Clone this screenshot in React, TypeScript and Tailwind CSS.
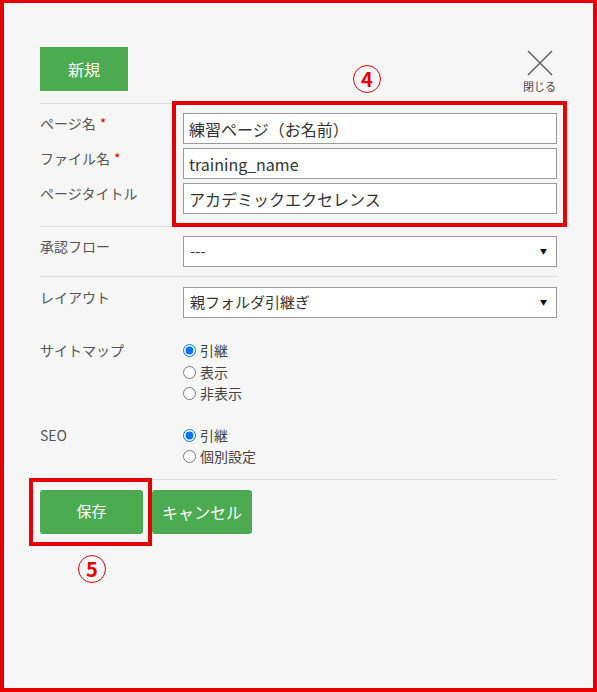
import React from 'react'

const font = { fontFamily: '"Noto Sans CJK JP", "Noto Sans", sans-serif' }

function Label({ children, required }: { children: React.ReactNode; required?: boolean }) {
  return (
    <div className="w-[143px] shrink-0 text-[14px] leading-5 text-[#555]">
      {children}
      {required && <span className="ml-1 text-[#e60000]">*</span>}
    </div>
  )
}

function TextBox({ value }: { value: string }) {
  return (
    <div className="flex h-[31px] items-center border border-[#9a9a9a] bg-white px-[5px] text-[16px] text-[#333]">
      {value}
    </div>
  )
}

function SelectBox({ value }: { value: string }) {
  return (
    <div className="flex h-[31px] flex-1 items-center justify-between border border-[#9a9a9a] bg-white pl-[6px] pr-[9px] text-[15px] text-[#333]">
      <span>{value}</span>
      <span className="text-[7px] text-black">▼</span>
    </div>
  )
}

function Radio({ label, checked, name }: { label: string; checked?: boolean; name: string }) {
  return (
    <label className="flex h-[21.5px] items-center gap-[4px] text-[14px] text-[#444]">
      <input type="radio" name={name} defaultChecked={checked} className="m-0 h-[13px] w-[13px]" />
      <span>{label}</span>
    </label>
  )
}

function Mark({ n }: { n: string }) {
  return (
    <div className="flex h-[28px] w-[28px] items-center justify-center rounded-full border-[1.5px] border-[#e60000] text-[20px] font-bold leading-none text-[#e60000]">
      {n}
    </div>
  )
}

export default function App() {
  return (
    <div
      style={font}
      className="relative h-[692px] w-[597px] border-x-4 border-b-4 border-t-[3px] border-[#e60000] bg-[#f6f6f6] pl-[36px] pr-[36px] pt-[44px]"
    >
      {/* header */}
      <div className="flex items-start justify-between border-b border-[#dcdcdc] pb-[10px]">
        <button className="h-[44px] w-[88px] bg-[#4caa50] text-[16px] text-white">新規</button>
        <div className="mr-[1px] mt-[3px] flex flex-col items-center">
          <svg width="26" height="26" viewBox="0 0 26 26" className="text-[#666]">
            <path d="M1 1 L25 25 M25 1 L1 25" stroke="currentColor" strokeWidth="1.6" fill="none" />
          </svg>
          <span className="mt-[3px] text-[11px] leading-[14px] text-[#444]">閉じる</span>
        </div>
      </div>

      {/* name / file / title */}
      <div className="flex flex-col gap-[4px] border-b border-[#dcdcdc] pb-[12px] pt-[9px]">
        <div className="flex">
          <Label required>ページ名</Label>
          <div className="flex-1"><TextBox value="練習ページ（お名前）" /></div>
        </div>
        <div className="flex">
          <Label required>ファイル名</Label>
          <div className="flex-1"><TextBox value="training_name" /></div>
        </div>
        <div className="flex">
          <Label>ページタイトル</Label>
          <div className="flex-1"><TextBox value="アカデミックエクセレンス" /></div>
        </div>
      </div>

      {/* approval flow */}
      <div className="flex border-b border-[#dcdcdc] pb-[9px] pt-[9px]">
        <Label>承認フロー</Label>
        <SelectBox value="---" />
      </div>

      {/* layout */}
      <div className="flex pt-[10px]">
        <Label>レイアウト</Label>
        <SelectBox value="親フォルダ引継ぎ" />
      </div>

      <div className="flex pt-[22px]">
        <Label>サイトマップ</Label>
        <div className="flex flex-col">
          <Radio name="sitemap" label="引継" checked />
          <Radio name="sitemap" label="表示" />
          <Radio name="sitemap" label="非表示" />
        </div>
      </div>

      <div className="flex border-b border-[#dcdcdc] pb-[11px] pt-[20px]">
        <Label>SEO</Label>
        <div className="flex flex-col">
          <Radio name="seo" label="引継" checked />
          <Radio name="seo" label="個別設定" />
        </div>
      </div>

      {/* buttons */}
      <div className="flex gap-[9px] pt-[10px]">
        <button className="h-[44px] w-[103px] rounded-[3px] bg-[#4caa50] text-[15px] text-white">保存</button>
        <button className="h-[44px] w-[100px] rounded-[3px] bg-[#4caa50] text-[16px] text-white">キャンセル</button>
      </div>

      {/* annotations */}
      <div className="pointer-events-none absolute left-[168px] top-[98px] h-[126px] w-[395px] border-4 border-[#e60000]" />
      <div className="pointer-events-none absolute left-[25px] top-[475px] h-[68px] w-[123px] border-4 border-[#e60000]" />
      <div className="absolute left-[349px] top-[62px]"><Mark n="4" /></div>
      <div className="absolute left-[74px] top-[552px]"><Mark n="5" /></div>
    </div>
  )
}
